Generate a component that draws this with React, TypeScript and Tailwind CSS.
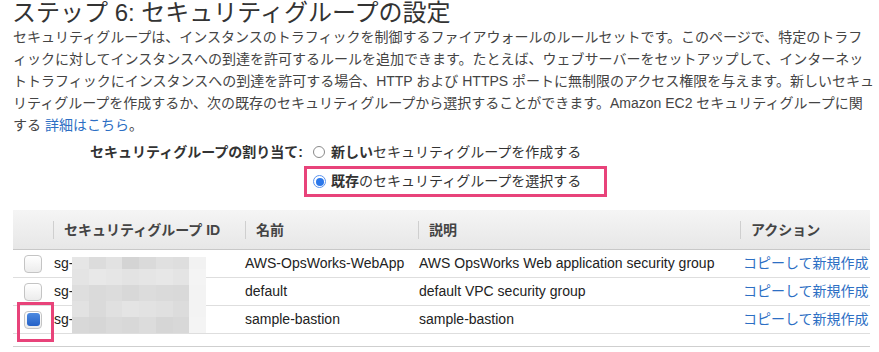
import React from "react";

const FONT = { fontFamily: '"Liberation Sans", "Noto Sans CJK JP", sans-serif' };

const mosaic: string[][] = [
  ["#e6e6e6", "#dcdcdc", "#e2e2e2", "#d4d4d4", "#dadada", "#e0e0e0", "#dedede", "#f2f2f2"],
  ["#e4e4e4", "#e8e8e8", "#e6e6e6", "#e3e3e3", "#e5e5e5", "#e7e7e7", "#e4e4e4", "#f4f4f4"],
  ["#dedede", "#dadada", "#dcdcdc", "#d8d8d8", "#dcdcdc", "#dadada", "#d9d9d9", "#f3f3f3"],
  ["#e2e2e2", "#dadada", "#e0e0e0", "#e4e4e4", "#e2e2e2", "#e0e0e0", "#dcdcdc", "#f3f3f3"],
  ["#d8d8d8", "#d6d6d6", "#dadada", "#d8d8d8", "#dcdcdc", "#d6d6d6", "#d8d8d8", "#f4f4f4"],
];

function Checkbox({ checked }: { checked?: boolean }) {
  return (
    <div className="ml-[11px] flex h-[18px] w-[18px] items-center justify-center rounded-[4px] border border-[#c4c4c4] bg-gradient-to-b from-[#ffffff] to-[#ececec] shadow-[inset_0_1px_0_#fff]">
      {checked && (
        <div className="h-[13px] w-[13px] rounded-[3px] bg-gradient-to-b from-[#4d8ae0] to-[#2561c7]" />
      )}
    </div>
  );
}

function Radio({ checked }: { checked?: boolean }) {
  return checked ? (
    <div className="flex h-[13px] w-[13px] items-center justify-center rounded-full border border-[#5b93ee] bg-white">
      <div className="h-[8px] w-[8px] rounded-full bg-[#2c78ea]" />
    </div>
  ) : (
    <div className="h-[12px] w-[12px] rounded-full border border-[#8a8a8a] bg-white" />
  );
}

const rows = [
  { name: "AWS-OpsWorks-WebApp", desc: "AWS OpsWorks Web application security group" },
  { name: "default", desc: "default VPC security group" },
  { name: "sample-bastion", desc: "sample-bastion", checked: true },
];

export default function App() {
  return (
    <div className="relative h-[352px] w-[879px] overflow-hidden bg-white text-[#333]" style={FONT}>
      <div className="pl-[12px] text-[24px] leading-[26px] text-[#333]">
        ステップ 6: セキュリティグループの設定
      </div>
      <div className="pl-[13px] text-[14px] leading-[22px] text-[#444]">
        <div className="whitespace-nowrap">
          セキュリティグループは、インスタンスのトラフィックを制御するファイアウォールのルールセットです。このページで、特定のトラフ
        </div>
        <div className="whitespace-nowrap">
          ィックに対してインスタンスへの到達を許可するルールを追加できます。たとえば、ウェブサーバーをセットアップして、インターネッ
        </div>
        <div className="whitespace-nowrap">
          トトラフィックにインスタンスへの到達を許可する場合、HTTP および HTTPS ポートに無制限のアクセス権限を与えます。新しいセキュ
        </div>
        <div className="whitespace-nowrap">
          リティグループを作成するか、次の既存のセキュリティグループから選択することができます。Amazon EC2 セキュリティグループに関
        </div>
        <div className="whitespace-nowrap">
          する <span className="text-[#2d6fc4]">詳細はこちら</span>。
        </div>
      </div>

      <div className="mt-[6px] flex text-[14px] text-[#333]">
        <div className="w-[304px] pr-[1px] text-right font-bold leading-[20px]">
          セキュリティグループの割り当て:
        </div>
        <div className="flex flex-col">
          <div className="ml-[9px] flex h-[20px] items-center gap-[6px]">
            <Radio />
            <span>
              <b>新しい</b>セキュリティグループを作成する
            </span>
          </div>
          <div className="mt-[4px] flex h-[31px] w-[303px] items-center gap-[5px] border-[3px] border-[#e8437a] pl-[6px]">
            <Radio checked />
            <span>
              <b>既存</b>のセキュリティグループを選択する
            </span>
          </div>
        </div>
      </div>

      <div className="ml-[13px] mt-[13px] w-[857px] text-[14px]">
        <div className="grid h-[40px] grid-cols-[40px_192px_173px_322px_130px] border-b border-[#c8c8c8] bg-gradient-to-b from-[#f5f5f5] to-[#e7e7e7] font-bold text-[#444]">
          <div />
          {["セキュリティグループ ID", "名前", "説明", "アクション"].map((h) => (
            <div key={h} className="flex items-center">
              <div className="border-l border-[#cfcfcf] pl-[10px] leading-[18px]">{h}</div>
            </div>
          ))}
        </div>
        {rows.map((r, i) => (
          <div
            key={i}
            className="grid h-[28px] grid-cols-[40px_192px_173px_322px_130px] items-center border-b border-[#dedede] text-[#222]"
          >
            <div className="flex items-center">
              <Checkbox checked={r.checked} />
            </div>
            <div className="pl-[1px]">sg-</div>
            <div className="whitespace-nowrap">{r.name}</div>
            <div className="whitespace-nowrap pl-[1px]">{r.desc}</div>
            <div className="whitespace-nowrap pl-[3px] text-[#2d6fc4]">コピーして新規作成</div>
          </div>
        ))}
        <div className="h-[13px] border-b border-[#cfcfcf]" />
      </div>

      {/* pixelated redaction over the IDs */}
      <div className="absolute left-[72px] top-[257px] flex w-[134px] flex-col">
        {mosaic.map((row, ri) => (
          <div key={ri} className={ri === 0 ? "flex h-[12px]" : "flex h-[16px]"}>
            {row.map((c, ci) => (
              <div key={ci} className="h-full w-[16.75px]" style={{ backgroundColor: c }} />
            ))}
          </div>
        ))}
      </div>

      {/* highlight around selected checkbox */}
      <div className="absolute left-[17px] top-[302px] h-[40px] w-[37px] border-[3px] border-[#e8437a]" />
    </div>
  );
}
